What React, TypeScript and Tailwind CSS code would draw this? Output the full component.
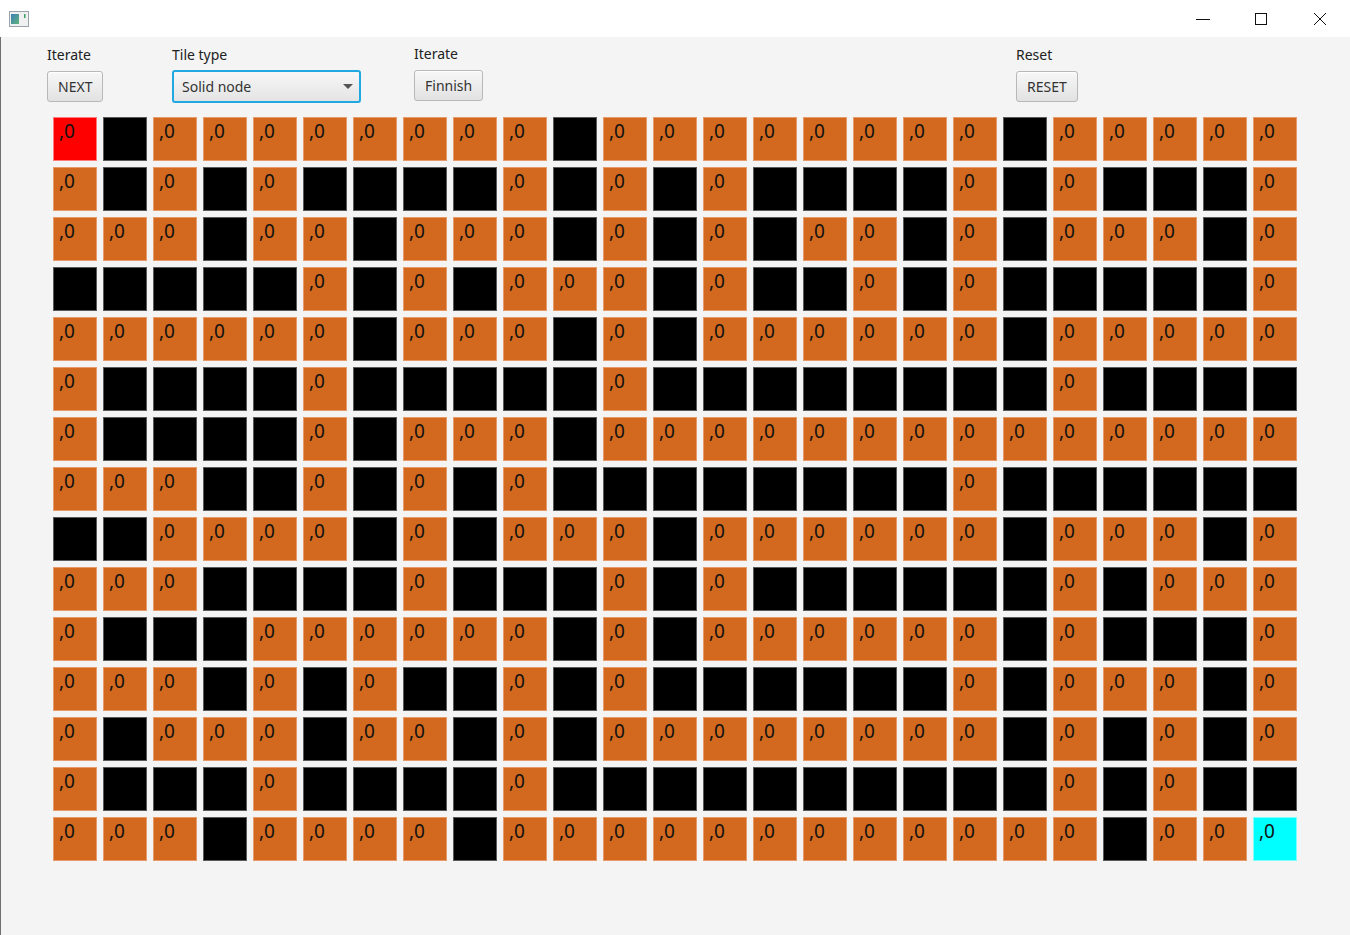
// 0 = open (orange), 1 = solid (black), 2 = start (red), 3 = goal (cyan)
const ROWS = [
  'SBOOOOOOOOBOOOOOOOOBOOOOO',
  'OBOBOBBBBOBOBOBBBBOBOBBBO',
  'OOOBOOBOOOBOBOBOOBOBOOOBO',
  'BBBBBOBOBOOOBOBBOBOBBBBBO',
  'OOOOOOBOOOBOBOOOOOOBOOOOO',
  'OBBBBOBBBBBOBBBBBBBBOBBBB',
  'OBBBBOBOOOBOOOOOOOOOOOOOO',
  'OOOBBOBOBOBBBBBBBBOBBBBBB',
  'BBOOOOBOBOOOBOOOOOOBOOOBO',
  'OOOBBBBOBBBOBOBBBBBBOBOOO',
  'OBBBOOOOOOBOBOOOOOOBOBBBO',
  'OOOBOBOBBOBOBBBBBBOBOOOBO',
  'OBOOOBOOBOBOOOOOOOOBOBOBO',
  'OBBBOBBBBOBBBBBBBBBBOBOBB',
  'OOOBOOOOBOOOOOOOOOOOOBOOG',
];

function Cell({ kind }: { kind: string }) {
  if (kind === 'B') {
    return <div className="w-[44px] h-[44px] bg-black border border-[#5a5a5a]" />;
  }
  const bg =
    kind === 'S'
      ? 'bg-[#ff0000] border-[#ff7a7a]'
      : kind === 'G'
      ? 'bg-[#00ffff] border-[#80ffff]'
      : 'bg-[#d2691e] border-[#e89a6a]';
  return (
    <div className={`w-[44px] h-[44px] border ${bg} relative`}>
      <span className="absolute left-[5px] top-[0px] text-[19px] leading-[26px] text-[#111]">,0</span>
    </div>
  );
}

function FxButton({ label }: { label: string }) {
  return (
    <button className="h-[31px] px-[10px] rounded-[3px] border border-[#b8b8b8] bg-gradient-to-b from-[#f7f7f7] to-[#e2e2e2] text-[14px] text-[#333] shadow-[inset_0_1px_0_#ffffff]">
      {label}
    </button>
  );
}

function AppIcon() {
  return (
    <svg width="20" height="16" viewBox="0 0 20 16">
      <rect x="0.5" y="0.5" width="19" height="15" fill="#f0f0f0" stroke="#9aa3ab" />
      <defs>
        <linearGradient id="ig" x1="0" y1="0" x2="1" y2="1">
          <stop offset="0" stopColor="#3d7fb8" />
          <stop offset="1" stopColor="#5fb37a" />
        </linearGradient>
      </defs>
      <rect x="2" y="3" width="8" height="10" fill="url(#ig)" />
      <rect x="15" y="3" width="1.5" height="4" fill="#3aa06a" />
    </svg>
  );
}

export default function App() {
  return (
    <div
      className="w-[1350px] h-[935px] flex flex-col bg-[#f4f4f4] overflow-hidden"
      style={{ fontFamily: '"Noto Sans", "Open Sans", sans-serif' }}
    >
      {/* Title bar */}
      <div className="h-[37px] shrink-0 bg-white flex items-center">
        <div className="pl-[9px] flex items-center">
          <AppIcon />
        </div>
        <div className="flex-1" />
        <div className="flex h-full">
          <div className="w-[58px] flex items-center justify-center">
            <svg width="14" height="14" viewBox="0 0 14 14">
              <line x1="0" y1="7.5" x2="14" y2="7.5" stroke="#111" strokeWidth="1" />
            </svg>
          </div>
          <div className="w-[58px] flex items-center justify-center">
            <svg width="14" height="14" viewBox="0 0 14 14">
              <rect x="1.5" y="1.5" width="11" height="11" fill="none" stroke="#111" strokeWidth="1" />
            </svg>
          </div>
          <div className="w-[60px] flex items-center justify-center">
            <svg width="14" height="14" viewBox="0 0 14 14">
              <path d="M1 1 L13 13 M13 1 L1 13" stroke="#111" strokeWidth="1" />
            </svg>
          </div>
        </div>
      </div>

      <div className="flex-1 flex flex-col border-l border-[#707070]">
        {/* Controls */}
        <div className="flex pl-[46px] pt-[8px]">
          <div className="w-[125px] flex flex-col gap-[6px]">
            <span className="text-[14px] leading-[20px] text-[#222]">Iterate</span>
            <div><FxButton label="NEXT" /></div>
          </div>
          <div className="w-[242px] flex flex-col gap-[5px]">
            <span className="text-[14px] leading-[20px] text-[#222]">Tile type</span>
            <div className="w-[189px] h-[33px] rounded-[3px] border-2 border-[#20a8e0] bg-gradient-to-b from-[#f7f7f7] to-[#e4e4e4] flex items-center justify-between pl-[8px] pr-[6px]">
              <span className="text-[14px] text-[#333]">Solid node</span>
              <svg width="10" height="6" viewBox="0 0 10 6">
                <path d="M0 0 H10 L5 5 Z" fill="#555" />
              </svg>
            </div>
          </div>
          <div className="w-[602px] flex flex-col gap-[6px] -mt-[1px]">
            <span className="text-[14px] leading-[20px] text-[#222]">Iterate</span>
            <div><FxButton label="Finnish" /></div>
          </div>
          <div className="flex flex-col gap-[6px]">
            <span className="text-[14px] leading-[20px] text-[#222]">Reset</span>
            <div><FxButton label="RESET" /></div>
          </div>
        </div>

        {/* Grid */}
        <div className="pl-[52px] pt-[14px]">
          <div className="grid grid-cols-[repeat(25,44px)] gap-[6px]">
            {ROWS.flatMap((row, r) =>
              row.split('').map((k, c) => <Cell key={`${r}-${c}`} kind={k} />)
            )}
          </div>
        </div>
      </div>
    </div>
  );
}
